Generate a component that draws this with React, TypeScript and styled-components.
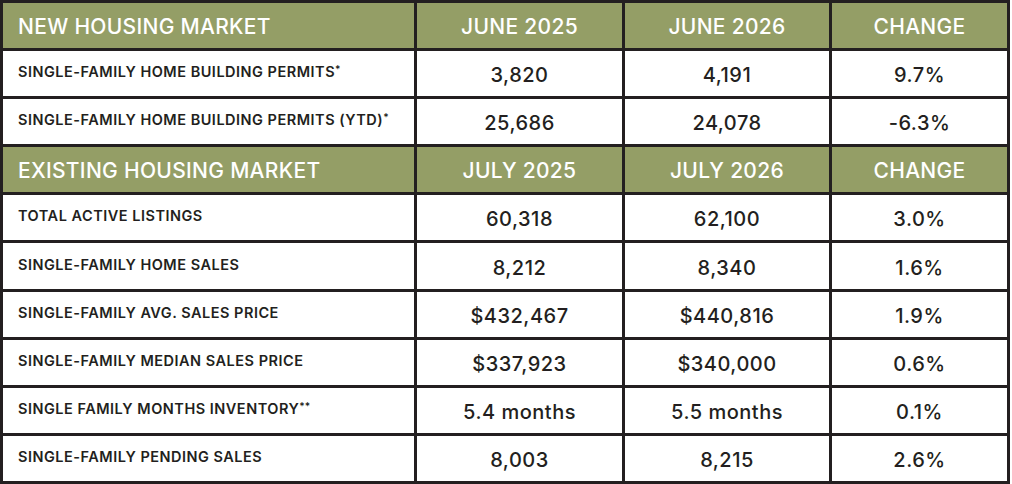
import React from "react";
import styled, { createGlobalStyle } from "styled-components";

const GlobalStyle = createGlobalStyle`
  html, body {
    margin: 0;
    padding: 0;
    background: #ffffff;
  }
  body {
    font-family: Inter, "Liberation Sans", sans-serif;
    color: #231f20;
  }
`;

const Table = styled.div`
  display: grid;
  grid-template-columns: 411px 205px 204px 175px;
  grid-template-rows: repeat(10, 1fr);
  gap: 3px;
  width: 1010px;
  height: 484px;
  box-sizing: border-box;
  padding: 3px;
  background: #231f20;
`;

const HeaderCell = styled.div<{ $align?: "left" | "center" }>`
  display: flex;
  align-items: center;
  justify-content: ${(p) => (p.$align === "left" ? "flex-start" : "center")};
  padding: 2px 0 0 ${(p) => (p.$align === "left" ? "15px" : "0")};
  background: #949e66;
  color: #ffffff;
  font-size: 21px;
  font-weight: 500;
  letter-spacing: 0.3px;
`;

const LabelCell = styled.div`
  display: flex;
  align-items: center;
  padding: 0 0 4px 15px;
  background: #ffffff;
  font-size: 14.5px;
  font-weight: 600;
  letter-spacing: 0.5px;
`;

const ValueCell = styled.div`
  display: flex;
  align-items: center;
  justify-content: center;
  padding-top: 3px;
  background: #ffffff;
  font-size: 20px;
  font-weight: 500;
  letter-spacing: 0.5px;
`;

const Mark = styled.span`
  font-size: 0.7em;
  vertical-align: 0.35em;
  letter-spacing: 0;
`;

type Section = {
  title: string;
  cols: [string, string, string];
  rows: [string, string, string, string, string?][];
};

const sections: Section[] = [
  {
    title: "NEW HOUSING MARKET",
    cols: ["JUNE 2025", "JUNE 2026", "CHANGE"],
    rows: [
      ["SINGLE-FAMILY HOME BUILDING PERMITS", "3,820", "4,191", "9.7%", "*"],
      ["SINGLE-FAMILY HOME BUILDING PERMITS (YTD)", "25,686", "24,078", "-6.3%", "*"],
    ],
  },
  {
    title: "EXISTING HOUSING MARKET",
    cols: ["JULY 2025", "JULY 2026", "CHANGE"],
    rows: [
      ["TOTAL ACTIVE LISTINGS", "60,318", "62,100", "3.0%"],
      ["SINGLE-FAMILY HOME SALES", "8,212", "8,340", "1.6%"],
      ["SINGLE-FAMILY AVG. SALES PRICE", "$432,467", "$440,816", "1.9%"],
      ["SINGLE-FAMILY MEDIAN SALES PRICE", "$337,923", "$340,000", "0.6%"],
      ["SINGLE FAMILY MONTHS INVENTORY", "5.4 months", "5.5 months", "0.1%", "**"],
      ["SINGLE-FAMILY PENDING SALES", "8,003", "8,215", "2.6%"],
    ],
  },
];

const App = () => {
  return (
    <>
      <GlobalStyle />
      <Table>
        {sections.map((s) => (
          <React.Fragment key={s.title}>
            <HeaderCell $align="left">{s.title}</HeaderCell>
            {s.cols.map((c) => (
              <HeaderCell key={c}>{c}</HeaderCell>
            ))}
            {s.rows.map((r) => (
              <React.Fragment key={r[0]}>
                <LabelCell>
                  <span>
                    {r[0]}
                    {r[4] && <Mark>{r[4]}</Mark>}
                  </span>
                </LabelCell>
                <ValueCell>{r[1]}</ValueCell>
                <ValueCell>{r[2]}</ValueCell>
                <ValueCell>{r[3]}</ValueCell>
              </React.Fragment>
            ))}
          </React.Fragment>
        ))}
      </Table>
    </>
  );
};

export default App;
